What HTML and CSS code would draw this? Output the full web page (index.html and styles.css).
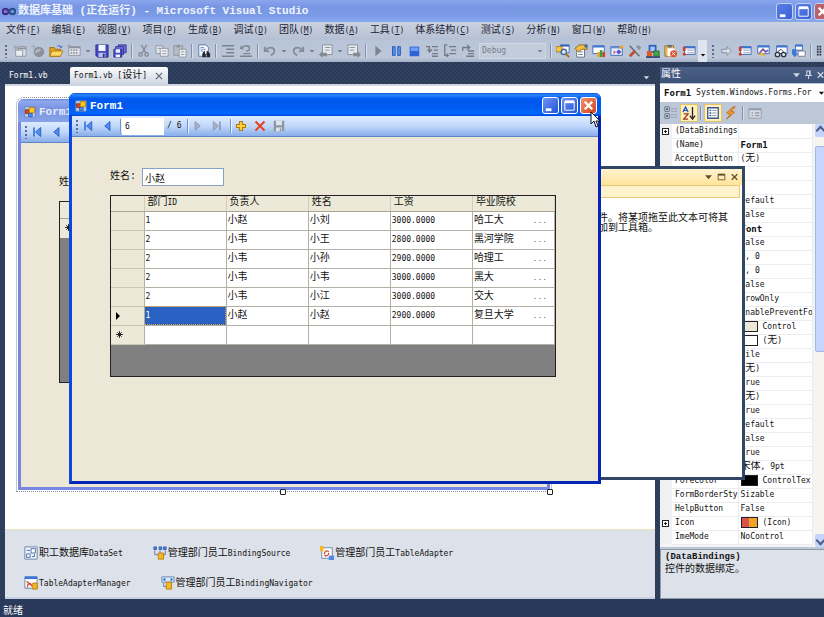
FILE: index.html
```html
<!DOCTYPE html>
<html lang="zh-CN">

<head>
    <meta charset="utf-8">
    <title>数据库基础 (正在运行) - Microsoft Visual Studio</title>
    <link rel="stylesheet" href="styles.css">
</head>

<body>

    <!-- shared icons -->
    <svg class="symbols" aria-hidden="true">
        <symbol id="i-vs" viewBox="0 0 16 10">
            <path d="M8 5C6 1 1 1 1 5s5 4 7 0" fill="none" stroke="#3b2c86" stroke-width="2.4" />
            <path d="M8 5c2-4 7-4 7 0s-5 4-7 0" fill="none" stroke="#28518f" stroke-width="2.4" />
            <path d="M3 3l3 3" stroke="#b04a9a" stroke-width="1.5" />
        </symbol>
        <symbol id="i-form" viewBox="0 0 16 16">
            <path d="M1 1h14v14H1z" fill="#b9cdea" stroke="#5d7db5" />
            <path d="M2 5h5v5H2z" fill="#d8401f" stroke="#8c2410" />
            <path d="M7 2h7v7H7z" fill="#ffc51f" stroke="#b07a08" />
            <path d="M6 10h5v4H6z" fill="#4f8df0" stroke="#2256b0" />
        </symbol>
        <symbol id="i-newproj" viewBox="0 0 16 16">
            <path d="M6 3h9v11H6z" fill="#d9dde4" stroke="#8e949e" />
            <path d="M3 7h8v7H3z" fill="#eceef2" stroke="#8e949e" />
            <path d="M6 5h9" stroke="#8e949e" stroke-width="2" />
            <path d="M3 1v6M0 4h6M1 2l4 4M5 2L1 6" stroke="#a0a5ad" />
        </symbol>
        <symbol id="i-newsite" viewBox="0 0 16 16">
            <circle cx="9" cy="9" r="6" fill="#8b9099" />
            <path d="M5 8c2-3 5-3 6-2s-1 3-3 3-1 3-3 2" fill="#b4b8bf" />
            <path d="M3 0v6M0 3h6" stroke="#a5aab2" />
        </symbol>
        <symbol id="i-open" viewBox="0 0 16 16">
            <path d="M1 4h5l1 2h6v8H1z" fill="#e8a317" stroke="#9b6a0c" />
            <path d="M3 8h13l-3 6H1z" fill="#ffd767" stroke="#a8760f" />
            <path d="M9 3c2-2 4-1 5 1l1-2M14 4l-2-1" fill="none" stroke="#2f5fb3" />
        </symbol>
        <symbol id="i-additem" viewBox="0 0 16 16">
            <path d="M2 3h13v10H2z" fill="#e6e9ee" stroke="#8e949e" />
            <path d="M2 4h13" stroke="#8e949e" stroke-width="2" />
            <path d="M4 7h9M4 10h9" stroke="#9298a2" stroke-dasharray="2 1" stroke-width="2" />
            <path d="M2 0v5M0 2h5" stroke="#9aa0a9" />
        </symbol>
        <symbol id="i-save" viewBox="0 0 16 16">
            <path d="M1 1h14v14H3l-2-2z" fill="#4348bf" stroke="#2b2f8d" />
            <path d="M4 1h8v7H4z" fill="#f4f6ff" />
            <path d="M4 10h8v5H4z" fill="#b9bfea" />
            <path d="M9 11h2v4H9z" fill="#2b2f8d" />
        </symbol>
        <symbol id="i-saveall" viewBox="0 0 16 16">
            <path d="M6 1h9v9H6z" fill="#6d73dc" stroke="#2b2f8d" />
            <path d="M3 3h9v9H3z" fill="#6d73dc" stroke="#2b2f8d" />
            <path d="M1 6h9v9H1z" fill="#4348bf" stroke="#2b2f8d" />
            <path d="M3 6h5v4H3zM3 12h5v3H3z" fill="#eef0ff" />
        </symbol>
        <symbol id="i-cut" viewBox="0 0 16 16">
            <path d="M5 1l5 9M11 1L6 10" stroke="#868c96" stroke-width="1.6" />
            <circle cx="4" cy="12" r="2" fill="none" stroke="#868c96" stroke-width="1.5" />
            <circle cx="11" cy="12" r="2" fill="none" stroke="#868c96" stroke-width="1.5" />
        </symbol>
        <symbol id="i-copy" viewBox="0 0 16 16">
            <path d="M1 2h8v9H1z" fill="#dfe2e8" stroke="#8e949e" />
            <path d="M6 5h9v9H6z" fill="#eceef2" stroke="#8e949e" />
            <path d="M8 8h5M8 11h5M3 5h3" stroke="#8e949e" />
        </symbol>
        <symbol id="i-paste" viewBox="0 0 16 16">
            <path d="M1 2h10v11H1z" fill="#b7bcc5" stroke="#8e949e" />
            <path d="M4 1h4v3H4z" fill="#8e949e" />
            <path d="M7 6h8v9H7z" fill="#eceef2" stroke="#8e949e" />
            <path d="M9 9h4M9 12h4" stroke="#8e949e" />
        </symbol>
        <symbol id="i-find" viewBox="0 0 16 16">
            <path d="M2 1h8l3 3v10H2z" fill="#f5f8fc" stroke="#5675a3" />
            <path d="M4 4h4M4 6h6M4 8h3" stroke="#6b8fc4" />
            <path d="M6 15V11l2-3h1v3h2V8h1l3 3v4h-4v-3h-1v3z" fill="#1f2733" />
        </symbol>
        <symbol id="i-comment" viewBox="0 0 16 16">
            <path d="M1 2h14M6 6h9M6 10h9M1 14h14" stroke="#7d838d" stroke-width="1.5" />
            <path d="M1 4v8" stroke="#b9bec7" />
        </symbol>
        <symbol id="i-uncomment" viewBox="0 0 16 16">
            <path d="M1 14h14M5 11h8M3 2l-1 3 3 1" fill="none" stroke="#7d838d" stroke-width="1.5" />
            <path d="M3 5c3-4 9-4 9 0 0 2-2 3-4 3" fill="none" stroke="#7d838d" stroke-width="1.5" />
        </symbol>
        <symbol id="i-undo" viewBox="0 0 16 16">
            <path d="M2 3v5h5" fill="none" stroke="#858b95" stroke-width="2" />
            <path d="M3 7c3-4 10-4 10 1 0 3-2 4-4 5" fill="none" stroke="#858b95" stroke-width="2" />
        </symbol>
        <symbol id="i-redo" viewBox="0 0 16 16">
            <path d="M14 3v5H9" fill="none" stroke="#858b95" stroke-width="2" />
            <path d="M13 7C10 3 3 3 3 8c0 3 2 4 4 5" fill="none" stroke="#858b95" stroke-width="2" />
        </symbol>
        <symbol id="i-back" viewBox="0 0 16 16">
            <path d="M4 1h11v11H4z" fill="#e6e9ee" stroke="#838993" />
            <path d="M7 4h6M7 7h5" stroke="#838993" />
            <path d="M0 12l4-4v2h5v4H4v2z" fill="#858b95" />
        </symbol>
        <symbol id="i-fwd" viewBox="0 0 16 16">
            <path d="M1 1h11v11H1z" fill="#e6e9ee" stroke="#838993" />
            <path d="M3 4h6M3 7h5" stroke="#838993" />
            <path d="M16 12l-4-4v2H7v4h5v2z" fill="#858b95" />
        </symbol>
        <symbol id="i-play" viewBox="0 0 16 16">
            <path d="M5 2l7 6-7 6z" fill="#7b828d" />
        </symbol>
        <symbol id="i-pause" viewBox="0 0 16 16">
            <path d="M4 3h3v10H4zM10 3h3v10h-3z" fill="#5f95f0" stroke="#1d4fb3" />
        </symbol>
        <symbol id="i-stop" viewBox="0 0 16 16">
            <path d="M3 3h11v11H3z" fill="#2e63d8" />
            <path d="M4 4h9v4H4z" fill="#6e9cf4" />
        </symbol>
        <symbol id="i-stepinto" viewBox="0 0 16 16">
            <path d="M8 3h7M10 7h5M8 11h7M8 14h7" stroke="#737a85" stroke-width="1.5" />
            <path d="M1 3h4v5M3 6l2 3 3-3" fill="none" stroke="#737a85" stroke-width="1.5" />
        </symbol>
        <symbol id="i-stepover" viewBox="0 0 16 16">
            <path d="M7 3h8M9 7h6M7 11h8" stroke="#737a85" stroke-width="1.5" />
            <path d="M5 1H2v12h3M4 11l2 2-2 2" fill="none" stroke="#737a85" stroke-width="1.5" />
        </symbol>
        <symbol id="i-stepout" viewBox="0 0 16 16">
            <path d="M8 8h7M8 11h7M6 14h9" stroke="#737a85" stroke-width="1.5" />
            <path d="M2 8V4h7M7 1l3 3-3 3" fill="none" stroke="#737a85" stroke-width="1.5" />
        </symbol>
        <symbol id="i-explorer" viewBox="0 0 16 16">
            <path d="M5 1h10v9H5z" fill="#fff" stroke="#3566b5" />
            <path d="M5 2h10" stroke="#3566b5" stroke-width="2" />
            <path d="M0 3h7v6H0z" fill="#f5c647" stroke="#a87a10" />
            <circle cx="9" cy="9" r="3" fill="#d7e8fb" stroke="#47698f" stroke-width="1.5" />
            <path d="M11 11l4 4" stroke="#a56b1c" stroke-width="2" />
        </symbol>
        <symbol id="i-props" viewBox="0 0 16 16">
            <path d="M3 5h9v10H3z" fill="#fff" stroke="#5b6a80" />
            <path d="M5 9h5M5 12h5" stroke="#5b6a80" />
            <path d="M1 5l5-4h9v5H9l-4 3z" fill="#f2bd45" stroke="#8c6414" />
            <path d="M12 1h3v3h-3z" fill="#3566b5" />
        </symbol>
        <symbol id="i-window" viewBox="0 0 16 16">
            <path d="M1 2h13v9H1z" fill="#fff" stroke="#3566b5" />
            <path d="M1 3h13" stroke="#3b75d8" stroke-width="2" />
            <path d="M6 9h3v6H6z" fill="#f0a81c" />
            <path d="M9 7h3v8H9z" fill="#3a9a3f" />
            <path d="M12 9h3v6h-3z" fill="#d8422b" />
        </symbol>
        <symbol id="i-gallery" viewBox="0 0 16 16">
            <path d="M1 3h13v10H1z" fill="#e9f1fb" stroke="#3566b5" />
            <path d="M1 4h13" stroke="#5f8ee0" stroke-width="2" />
            <path d="M4 7l3 2-3 3z" fill="#d45cb0" />
            <path d="M10 6l3 3-3 3-3-3z" fill="#5a55c8" />
            <path d="M10 3l4-2 1 3-3 2z" fill="#f2a11d" />
        </symbol>
        <symbol id="i-tools" viewBox="0 0 16 16">
            <path d="M2 2l11 12" stroke="#69717d" stroke-width="2" />
            <path d="M8 8l-6 6" stroke="#c24a26" stroke-width="3" />
            <path d="M9 3l4 4 2-3-3-3z" fill="#8a919c" />
        </symbol>
        <symbol id="i-extension" viewBox="0 0 16 16">
            <path d="M3 1h9v9H3z" fill="#2d62c4" />
            <path d="M5 3h5v5H5z" fill="#a9c9fa" />
            <path d="M1 8h6v7H1z" fill="#de5a2c" />
            <path d="M9 8h6v6H9z" fill="#4aa845" stroke="#23692a" />
            <path d="M0 15h16" stroke="#344c78" stroke-width="2" />
        </symbol>
        <symbol id="i-paste-error" viewBox="0 0 16 16">
            <path d="M1 2h10v12H1z" fill="#e8b95f" stroke="#94702c" />
            <path d="M4 1h5v3H4z" fill="#66727f" />
            <path d="M4 5h8v9H4z" fill="#fff" />
            <circle cx="11" cy="11" r="4" fill="#e05127" />
            <path d="M9 9l4 4M13 9l-4 4" stroke="#fff" />
        </symbol>
        <symbol id="i-errors" viewBox="0 0 16 16">
            <path d="M3 3h12v9H3z" fill="#fff" stroke="#3566b5" />
            <path d="M3 4h12" stroke="#3b75d8" stroke-width="2" />
            <path d="M6 7h8M6 10h8" stroke="#8190a8" />
            <path d="M1 3h3v5H1zM1 10h3v3H1z" fill="#d93a22" />
        </symbol>
        <symbol id="i-arrow" viewBox="0 0 16 16">
            <path d="M2 6h6V3l5 5-5 5v-3H2z" fill="#d9dee7" stroke="#7e8794" />
        </symbol>
        <symbol id="i-watch" viewBox="0 0 16 16">
            <path d="M2 2h13v9H2z" fill="#fff" stroke="#3566b5" />
            <path d="M2 3h13" stroke="#3b75d8" stroke-width="2" />
            <path d="M4 10l4-4 3 3 3-2" fill="none" stroke="#7250b5" stroke-width="2" />
            <path d="M3 12l4-3 4 5z" fill="#f2b526" />
        </symbol>
        <symbol id="i-glasses" viewBox="0 0 16 16">
            <path d="M3 2h12v9H3z" fill="#fff" stroke="#3566b5" />
            <path d="M3 3h12" stroke="#3b75d8" stroke-width="2" />
            <circle cx="4" cy="12" r="2.5" fill="#dfe9f7" stroke="#2c333e" stroke-width="1.5" />
            <circle cx="11" cy="12" r="2.5" fill="#dfe9f7" stroke="#2c333e" stroke-width="1.5" />
            <path d="M4 9l4-3 3 3" fill="none" stroke="#2c333e" />
        </symbol>
        <symbol id="i-stack" viewBox="0 0 16 16">
            <path d="M4 1h8v6H4z" fill="#fff" stroke="#3566b5" />
            <path d="M4 2h8" stroke="#3b75d8" stroke-width="2" />
            <path d="M7 8h8v6H7z" fill="#fff" stroke="#6f7681" />
            <path d="M0 6h5v5h2l-4 4-3-4z" fill="#3e78da" />
        </symbol>
        <symbol id="i-hex" viewBox="0 0 16 16">
            <path d="M1 3h6M1 6h6M1 9h6M1 12h6" stroke="#2c333e" stroke-width="2" stroke-dasharray="2 1" />
        </symbol>
        <symbol id="i-first" viewBox="0 0 16 16">
            <path d="M3 2h2v12H3z" fill="#2c66d4" />
            <path d="M13 2v12L6 8z" fill="#4e8cf0" stroke="#1c4fb8" />
        </symbol>
        <symbol id="i-prev" viewBox="0 0 16 16">
            <path d="M12 2v12L5 8z" fill="#4e8cf0" stroke="#1c4fb8" />
        </symbol>
        <symbol id="i-next" viewBox="0 0 16 16">
            <path d="M4 2v12l7-6z" fill="#a3afc4" stroke="#8794ac" />
        </symbol>
        <symbol id="i-last" viewBox="0 0 16 16">
            <path d="M3 2v12l7-6z" fill="#a3afc4" stroke="#8794ac" />
            <path d="M11 2h2v12h-2z" fill="#8794ac" />
        </symbol>
        <symbol id="i-plus" viewBox="0 0 16 16">
            <path d="M6 2h4v4h4v4h-4v4H6v-4H2V6h4z" fill="#ffd23c" stroke="#b47c0c" stroke-width="1.5" />
        </symbol>
        <symbol id="i-delete" viewBox="0 0 16 16">
            <path d="M2 2l12 12M14 2L2 14" stroke="#e8401c" stroke-width="2.5" />
        </symbol>
        <symbol id="i-save-off" viewBox="0 0 16 16">
            <path d="M1 1h14v14H1z" fill="#8d96a3" />
            <path d="M4 1h8v6H4zM4 10h8v5H4z" fill="#dbe2ec" />
            <path d="M9 11h2v4H9z" fill="#8d96a3" />
        </symbol>
        <symbol id="i-min" viewBox="0 0 16 16">
            <path d="M3 11h6v3H3z" fill="#fff" />
        </symbol>
        <symbol id="i-max" viewBox="0 0 16 16">
            <path d="M3 4h10v9H3z" fill="none" stroke="#fff" />
            <path d="M3 4h10" stroke="#fff" stroke-width="3" />
        </symbol>
        <symbol id="i-close" viewBox="0 0 16 16">
            <path d="M4 4l8 8M12 4l-8 8" stroke="#fff" stroke-width="2.5" />
        </symbol>
        <symbol id="i-x" viewBox="0 0 16 16">
            <path d="M3 3l10 10M13 3L3 13" stroke="currentColor" stroke-width="2.2" />
        </symbol>
        <symbol id="i-caret" viewBox="0 0 16 16">
            <path d="M2 5h12l-6 7z" fill="currentColor" />
        </symbol>
        <symbol id="i-pin" viewBox="0 0 16 16">
            <path d="M5 1h6v8H5zM2 9h12M8 9v6M10 1v8" fill="none" stroke="currentColor" stroke-width="1.8" />
        </symbol>
        <symbol id="i-box" viewBox="0 0 16 16">
            <path d="M2 3h12v10H2z" fill="none" stroke="currentColor" stroke-width="1.5" />
            <path d="M2 4h12" stroke="currentColor" stroke-width="3" />
        </symbol>
        <symbol id="i-category" viewBox="0 0 16 16">
            <path d="M1 1h5v5H1zM1 9h5v5H1z" fill="#fff" stroke="#4a5a75" />
            <path d="M2 3.5h3M3.5 2v3M2 11.5h3M3.5 10v3" stroke="#1f2b40" />
            <path d="M8 3h7M8 6h7M8 10h7M8 13h7" stroke="#8a93a3" stroke-dasharray="3 1" />
        </symbol>
        <symbol id="i-sort" viewBox="0 0 16 16">
            <path d="M1 7l3-6 3 6M2 5h4" fill="none" stroke="#2c5bc0" stroke-width="1.5" />
            <path d="M2 9h5l-5 6h5" fill="none" stroke="#a13c1d" stroke-width="1.5" />
            <path d="M12 1v12M9 11l3 4 3-4" fill="none" stroke="#222" stroke-width="1.5" />
        </symbol>
        <symbol id="i-list" viewBox="0 0 16 16">
            <path d="M2 2h12v12H2z" fill="#fff" stroke="#3d5686" stroke-width="1.5" />
            <path d="M4 5h2M4 8h2M4 11h2" stroke="#234fa8" stroke-width="1.5" />
            <path d="M7 5h5M7 8h5M7 11h5" stroke="#7c8798" />
        </symbol>
        <symbol id="i-bolt" viewBox="0 0 16 16">
            <path d="M10 1L3 8l4 1-4 6 9-8-4-1 5-5z" fill="#f39a2d" stroke="#c46614" />
        </symbol>
        <symbol id="i-page" viewBox="0 0 16 16">
            <path d="M1 3h14v11H1z" fill="#d6dae2" stroke="#949ba8" />
            <path d="M1 4h14M4 8h2M8 8h5M4 11h2M8 11h5" stroke="#949ba8" stroke-width="1.5" />
        </symbol>
        <symbol id="i-dataset" viewBox="0 0 16 16">
            <path d="M1 1h14v14H1z" fill="#edf3fb" stroke="#5f7fae" />
            <path d="M8 3h5v5H8zM3 9h4v4H3z" fill="#fff" stroke="#44689c" />
            <path d="M3 5h4M9 12h3V9" fill="none" stroke="#44689c" />
        </symbol>
        <symbol id="i-source" viewBox="0 0 16 16">
            <path d="M1 1h3v3H1zM7 1h3v3H7zM12 1h3v3h-3z" fill="#4d8ae0" stroke="#2e5fae" />
            <path d="M2 5v5h4M14 5v5h-4M8 5v3" fill="none" stroke="#56749f" />
            <path d="M6 8h6v7H6z" fill="#f5b921" stroke="#b57d0b" />
        </symbol>
        <symbol id="i-adapter" viewBox="0 0 16 16">
            <path d="M2 2h12v12H2z" fill="#fff" stroke="#5f7fae" />
            <path d="M5 9c0-4 4-4 5-2M10 8c0 4-4 4-5 2" fill="none" stroke="#d3492a" stroke-width="1.5" />
            <path d="M0 0h4v6H0z" fill="#f5b921" />
            <path d="M10 11h6v5h-6z" fill="#4d8ae0" />
        </symbol>
        <symbol id="i-manager" viewBox="0 0 16 16">
            <path d="M1 1h14v13H1z" fill="#fff" stroke="#5f7fae" />
            <path d="M1 2h14" stroke="#3b75d8" stroke-width="3" />
            <path d="M4 13c0-6 4-6 5-1M3 6l4 4" fill="none" stroke="#d3492a" stroke-width="1.5" />
            <path d="M10 8h5v7h-5z" fill="#f5b921" stroke="#b57d0b" />
        </symbol>
        <symbol id="i-navigator" viewBox="0 0 16 16">
            <path d="M1 1h14v6H1z" fill="#dbe8f9" stroke="#5f7fae" />
            <path d="M5 2v4L2 4zM11 2v4l3-2z" fill="#2f67c8" />
            <path d="M3 8v4h3" fill="none" stroke="#56749f" />
            <path d="M6 7h6v8H6z" fill="#f5b921" stroke="#b57d0b" />
        </symbol>
        <symbol id="i-star" viewBox="0 0 16 16">
            <path d="M8 2v12M2 8h12M4 4l8 8M12 4l-8 8" stroke="#111" stroke-width="1.6" />
        </symbol>
    </svg>

    <div class="ide">
        <header class="ide-title">
            <svg class="vs-logo"><use href="#i-vs" /></svg>
            <h1>数据库基础 (正在运行) - Microsoft Visual Studio</h1>
            <div class="win-buttons">
                <button aria-label="最小化"><svg><use href="#i-min" /></svg></button>
                <button aria-label="最大化"><svg><use href="#i-max" /></svg></button>
                <button class="close" aria-label="关闭"><svg><use href="#i-close" /></svg></button>
            </div>
        </header>

        <nav class="menu">
            <button>文件<span class="en">(<u>F</u>)</span></button>
            <button>编辑<span class="en">(<u>E</u>)</span></button>
            <button>视图<span class="en">(<u>V</u>)</span></button>
            <button>项目<span class="en">(<u>P</u>)</span></button>
            <button>生成<span class="en">(<u>B</u>)</span></button>
            <button>调试<span class="en">(<u>D</u>)</span></button>
            <button>团队<span class="en">(<u>M</u>)</span></button>
            <button>数据<span class="en">(<u>A</u>)</span></button>
            <button>工具<span class="en">(<u>T</u>)</span></button>
            <button>体系结构<span class="en">(<u>C</u>)</span></button>
            <button>测试<span class="en">(<u>S</u>)</span></button>
            <button>分析<span class="en">(<u>N</u>)</span></button>
            <button>窗口<span class="en">(<u>W</u>)</span></button>
            <button>帮助<span class="en">(<u>H</u>)</span></button>
        </nav>

        <div class="toolbar">
            <span class="grip"></span>
            <button aria-label="新建项目"><svg><use href="#i-newproj" /></svg></button>
            <button aria-label="新建网站"><svg><use href="#i-newsite" /></svg></button>
            <button aria-label="打开文件"><svg><use href="#i-open" /></svg></button>
            <button aria-label="添加新项"><svg><use href="#i-additem" /></svg></button>
            <button class="drop" aria-label="更多"><svg><use href="#i-caret" /></svg></button>
            <button aria-label="保存"><svg><use href="#i-save" /></svg></button>
            <button aria-label="全部保存"><svg><use href="#i-saveall" /></svg></button>
            <span class="sep"></span>
            <button aria-label="剪切"><svg><use href="#i-cut" /></svg></button>
            <button aria-label="复制"><svg><use href="#i-copy" /></svg></button>
            <button aria-label="粘贴"><svg><use href="#i-paste" /></svg></button>
            <span class="sep"></span>
            <button aria-label="查找"><svg><use href="#i-find" /></svg></button>
            <span class="sep"></span>
            <button aria-label="注释"><svg><use href="#i-comment" /></svg></button>
            <button aria-label="取消注释"><svg><use href="#i-uncomment" /></svg></button>
            <span class="sep"></span>
            <button aria-label="撤消"><svg><use href="#i-undo" /></svg></button>
            <button class="drop" aria-label="撤消列表"><svg><use href="#i-caret" /></svg></button>
            <button aria-label="重做"><svg><use href="#i-redo" /></svg></button>
            <button class="drop" aria-label="重做列表"><svg><use href="#i-caret" /></svg></button>
            <button aria-label="向后导航"><svg><use href="#i-back" /></svg></button>
            <button class="drop" aria-label="导航列表"><svg><use href="#i-caret" /></svg></button>
            <button aria-label="向前导航"><svg><use href="#i-fwd" /></svg></button>
            <span class="sep"></span>
            <button aria-label="继续"><svg><use href="#i-play" /></svg></button>
            <button aria-label="全部中断"><svg><use href="#i-pause" /></svg></button>
            <button aria-label="停止调试"><svg><use href="#i-stop" /></svg></button>
            <button aria-label="逐语句"><svg><use href="#i-stepinto" /></svg></button>
            <button aria-label="逐过程"><svg><use href="#i-stepover" /></svg></button>
            <button aria-label="跳出"><svg><use href="#i-stepout" /></svg></button>
            <span class="combo">
                <select class="en" aria-label="解决方案配置" disabled>
                    <option>Debug</option>
                </select>
                <svg><use href="#i-caret" /></svg>
            </span>
            <span class="sep"></span>
            <button aria-label="解决方案资源管理器"><svg><use href="#i-explorer" /></svg></button>
            <button aria-label="属性窗口"><svg><use href="#i-props" /></svg></button>
            <button aria-label="对象浏览器"><svg><use href="#i-window" /></svg></button>
            <button aria-label="起始页"><svg><use href="#i-gallery" /></svg></button>
            <button aria-label="工具箱"><svg><use href="#i-tools" /></svg></button>
            <button aria-label="扩展管理器"><svg><use href="#i-extension" /></svg></button>
            <button aria-label="错误列表"><svg><use href="#i-paste-error" /></svg></button>
            <button aria-label="即时窗口"><svg><use href="#i-errors" /></svg></button>
            <button class="overflow" aria-label="工具栏选项"><svg><use href="#i-caret" /></svg></button>
            <span class="grip"></span>
            <button aria-label="显示下一语句"><svg><use href="#i-arrow" /></svg></button>
            <button aria-label="断点"><svg><use href="#i-errors" /></svg></button>
            <button aria-label="局部变量"><svg><use href="#i-watch" /></svg></button>
            <button aria-label="监视"><svg><use href="#i-glasses" /></svg></button>
            <button aria-label="调用堆栈"><svg><use href="#i-stack" /></svg></button>
            <span class="sep"></span>
            <button aria-label="十六进制"><svg><use href="#i-hex" /></svg></button>
        </div>

        <main class="workspace">
            <section class="documents">
                <div class="tabs">
                    <button class="tab en">Form1.vb</button>
                    <button class="tab active"><span class="en">Form1.vb [</span>设计<span class="en">]</span><svg><use href="#i-x" /></svg></button>
                    <svg class="tab-list"><use href="#i-caret" /></svg>
                </div>

                <div class="designer">
                    <!-- form being designed -->
                    <div class="form-window design">
                        <div class="form-title">
                            <svg><use href="#i-form" /></svg>
                            <h2>Form1</h2>
                        </div>
                        <div class="navigator">
                            <span class="grip"></span>
                            <svg><use href="#i-first" /></svg>
                            <svg><use href="#i-prev" /></svg>
                        </div>
                        <div class="form-body">
                            <div class="field"><span>姓名:</span></div>
                            <div class="grid">
                                <div class="grid-blank-head"></div>
                                <div class="grid-blank-row"><svg><use href="#i-star" /></svg></div>
                            </div>
                        </div>
                    </div>
                    <i class="handle bottom"></i>
                    <i class="handle corner"></i>
                </div>

                <div class="tray">
                    <div class="tray-row">
                        <span><svg><use href="#i-dataset" /></svg>职工数据库<span class="en">DataSet</span></span>
                        <span><svg><use href="#i-source" /></svg>管理部门员工<span class="en">BindingSource</span></span>
                        <span><svg><use href="#i-adapter" /></svg>管理部门员工<span class="en">TableAdapter</span></span>
                    </div>
                    <div class="tray-row">
                        <span><svg><use href="#i-manager" /></svg><span class="en">TableAdapterManager</span></span>
                        <span><svg><use href="#i-navigator" /></svg>管理部门员工<span class="en">BindingNavigator</span></span>
                    </div>
                </div>
            </section>

            <aside class="properties">
                <div class="panel-title">
                    <h2>属性</h2>
                    <svg><use href="#i-caret" /></svg>
                    <svg><use href="#i-pin" /></svg>
                    <svg><use href="#i-x" /></svg>
                </div>
                <button class="object en"><b>Form1</b> System.Windows.Forms.For<svg><use href="#i-caret" /></svg></button>
                <div class="prop-tools">
                    <button aria-label="按分类顺序"><svg><use href="#i-category" /></svg></button>
                    <button class="on" aria-label="字母顺序"><svg><use href="#i-sort" /></svg></button>
                    <span class="sep"></span>
                    <button class="on" aria-label="属性"><svg><use href="#i-list" /></svg></button>
                    <button aria-label="事件"><svg><use href="#i-bolt" /></svg></button>
                    <span class="sep"></span>
                    <button aria-label="属性页"><svg><use href="#i-page" /></svg></button>
                </div>
                <div class="prop-list">
                    <table class="en">
                        <tr><td><i class="expand"></i></td><th>(DataBindings</th><td></td></tr>
                        <tr><td></td><th>(Name)</th><td><b>Form1</b></td></tr>
                        <tr><td></td><th>AcceptButton</th><td>(<span class="cn">无</span>)</td></tr>
                        <tr><td></td><th></th><td></td></tr>
                        <tr><td></td><th></th><td></td></tr>
                        <tr><td></td><th></th><td>Default</td></tr>
                        <tr><td></td><th></th><td>False</td></tr>
                        <tr><td></td><th></th><td><b>Font</b></td></tr>
                        <tr><td></td><th></th><td>False</td></tr>
                        <tr><td></td><th></th><td>0, 0</td></tr>
                        <tr><td></td><th></th><td>0, 0</td></tr>
                        <tr><td></td><th></th><td>False</td></tr>
                        <tr><td></td><th></th><td>GrowOnly</td></tr>
                        <tr><td></td><th></th><td>EnablePreventFo</td></tr>
                        <tr><td></td><th></th><td><i class="swatch control"></i>Control</td></tr>
                        <tr><td></td><th></th><td><i class="swatch"></i>(<span class="cn">无</span>)</td></tr>
                        <tr><td></td><th></th><td>Tile</td></tr>
                        <tr><td></td><th></th><td>(<span class="cn">无</span>)</td></tr>
                        <tr><td></td><th></th><td>True</td></tr>
                        <tr><td></td><th></th><td>(<span class="cn">无</span>)</td></tr>
                        <tr><td></td><th></th><td>True</td></tr>
                        <tr><td></td><th></th><td>Default</td></tr>
                        <tr><td></td><th></th><td>False</td></tr>
                        <tr><td></td><th></th><td>True</td></tr>
                        <tr><td></td><th></th><td><span class="cn">宋体</span>, 9pt</td></tr>
                        <tr><td></td><th>ForeColor</th><td><i class="swatch text"></i>ControlTex</td></tr>
                        <tr><td></td><th>FormBorderSty</th><td>Sizable</td></tr>
                        <tr><td></td><th>HelpButton</th><td>False</td></tr>
                        <tr><td><i class="expand"></i></td><th>Icon</th><td><i class="swatch icon"></i>(Icon)</td></tr>
                        <tr><td></td><th>ImeMode</th><td>NoControl</td></tr>
                    </table>
                    <div class="scrollbar">
                        <span class="arrow up"></span>
                        <span class="thumb"></span>
                        <span class="arrow"></span>
                    </div>
                </div>
                <div class="prop-help">
                    <b>(DataBindings)</b>
                    <p>控件的数据绑定。</p>
                </div>
            </aside>
        </main>

        <footer class="status">就绪</footer>
    </div>

    <!-- floating toolbox -->
    <section class="toolbox">
        <div class="toolbox-title">
            <svg><use href="#i-caret" /></svg>
            <svg><use href="#i-box" /></svg>
            <svg><use href="#i-x" /></svg>
        </div>
        <div class="toolbox-group"></div>
        <p>件。将某项拖至此文本可将其加到工具箱。</p>
    </section>

    <!-- running form -->
    <section class="form-window running">
        <div class="form-title">
            <svg><use href="#i-form" /></svg>
            <h2>Form1</h2>
            <div class="win-buttons">
                <button aria-label="最小化"><svg><use href="#i-min" /></svg></button>
                <button aria-label="最大化"><svg><use href="#i-max" /></svg></button>
                <button class="close" aria-label="关闭"><svg><use href="#i-close" /></svg></button>
            </div>
        </div>
        <div class="navigator">
            <span class="grip"></span>
            <button aria-label="第一条"><svg><use href="#i-first" /></svg></button>
            <button aria-label="上一条"><svg><use href="#i-prev" /></svg></button>
            <span class="sep"></span>
            <input class="en" type="text" value="6" aria-label="当前位置">
            <span class="count en">/ 6</span>
            <span class="sep"></span>
            <button aria-label="下一条"><svg><use href="#i-next" /></svg></button>
            <button aria-label="最后一条"><svg><use href="#i-last" /></svg></button>
            <span class="sep"></span>
            <button aria-label="新添"><svg><use href="#i-plus" /></svg></button>
            <button aria-label="删除"><svg><use href="#i-delete" /></svg></button>
            <button aria-label="保存数据"><svg><use href="#i-save-off" /></svg></button>
        </div>
        <div class="form-body">
            <div class="field">
                <label for="name">姓名:</label>
                <input type="text" id="name" value="小赵">
            </div>
            <div class="grid">
                <table>
                    <thead>
                        <tr>
                            <th></th>
                            <th>部门<span class="en">ID</span></th>
                            <th>负责人</th>
                            <th>姓名</th>
                            <th>工资</th>
                            <th>毕业院校</th>
                        </tr>
                    </thead>
                    <tbody>
                        <tr><th></th><td class="en">1</td><td>小赵</td><td>小刘</td><td class="en">3000.0000</td><td>哈工大<i>...</i></td></tr>
                        <tr><th></th><td class="en">2</td><td>小韦</td><td>小王</td><td class="en">2800.0000</td><td>黑河学院<i>...</i></td></tr>
                        <tr><th></th><td class="en">2</td><td>小韦</td><td>小孙</td><td class="en">2900.0000</td><td>哈理工<i>...</i></td></tr>
                        <tr><th></th><td class="en">2</td><td>小韦</td><td>小韦</td><td class="en">3000.0000</td><td>黑大<i>...</i></td></tr>
                        <tr><th></th><td class="en">2</td><td>小韦</td><td>小江</td><td class="en">3000.0000</td><td>交大<i>...</i></td></tr>
                        <tr><th><i class="current"></i></th><td class="en selected">1</td><td>小赵</td><td>小赵</td><td class="en">2900.0000</td><td>复旦大学<i>...</i></td></tr>
                        <tr><th><svg><use href="#i-star" /></svg></th><td></td><td></td><td></td><td></td><td></td></tr>
                    </tbody>
                </table>
            </div>
        </div>
    </section>

    <svg class="cursor" viewBox="0 0 10 17" aria-hidden="true">
        <path d="M1 1v12l3-3 2 6 2-1-2-5h4z" fill="#fff" stroke="#111" />
    </svg>

</body>

</html>
```

FILE: styles.css
```css
* {
    box-sizing: border-box;
}

body {
    margin: 0;
    height: 100vh;
    overflow: hidden;
    position: relative;
    background-color: #2b3c59;
    font-family: "Liberation Mono", "Noto Sans CJK SC", monospace;
    font-size: 10px;
    line-height: 14px;
    color: #111;
}

h1,
h2,
p {
    margin: 0;
    font-size: 11px;
    font-weight: bold;
}

button,
input,
select {
    font-family: inherit;
    font-size: 10px;
    line-height: 14px;
    color: inherit;
    margin: 0;
    padding: 0;
    border: none;
    background: none;
}

svg {
    width: 14px;
    height: 14px;
    flex: none;
}

.symbols {
    position: absolute;
    width: 0;
    height: 0;
}

/* latin text is set smaller so two letters take one han cell */
.en,
.navigator .en {
    font-family: "DejaVu Sans Mono", "Noto Sans CJK SC", monospace;
    font-size: 8px;
}

.cn {
    font-size: 10px;
    line-height: 10px;
}

.sep {
    flex: none;
    width: 2px;
    height: 14px;
    margin: 0 2px;
    border-left: 1px solid #8591a8;
    border-right: 1px solid #d9dfe9;
}

.grip {
    flex: none;
    width: 2px;
    height: 13px;
    margin: 0 4px 0 5px;
    background: repeating-linear-gradient(#5d6b85 0 2px, transparent 2px 4px);
}

/* main window */
.ide {
    display: flex;
    flex-direction: column;
    width: calc(100% + 8px);
    height: 100%;
}

.ide-title {
    display: flex;
    align-items: center;
    height: 22px;
    padding: 0 1px 0 2px;
    background: linear-gradient(#8aa6ee, #7896e3 30%, #7b9be6 70%, #86a8ee);
    color: #eef3fd;
}

.vs-logo {
    height: 9px;
}

.ide-title h1 {
    flex: 1;
    margin-left: 2px;
    white-space: nowrap;
}

.win-buttons {
    display: flex;
    gap: 2px;
}

.win-buttons button {
    display: flex;
    width: 17px;
    height: 17px;
    border: 1px solid #fff;
    border-radius: 3px;
    background: linear-gradient(135deg, #6f94f2, #2453d6);
}

.win-buttons svg {
    width: 15px;
    height: 15px;
}

.win-buttons .close {
    background: linear-gradient(135deg, #f0906f, #d8431c);
}

.ide-title .win-buttons button {
    border-color: #c3d1f5;
    background: linear-gradient(135deg, #5b7fe6, #3a5fd4);
}

.ide-title .win-buttons .close {
    background: #b9616c;
}

.menu {
    display: flex;
    align-items: center;
    gap: 11px;
    height: 18px;
    padding-left: 6px;
    background: linear-gradient(#cbd2df, #b6c0d4);
}

.menu button {
    white-space: nowrap;
    color: #1b2536;
}

.toolbar {
    display: flex;
    align-items: center;
    height: 22px;
    background: linear-gradient(#b7c3d7, #bcc7d9 80%, #a3b0c6);
}

.toolbar button {
    display: flex;
    justify-content: center;
    flex: none;
    width: 18px;
}

.toolbar .drop {
    width: 10px;
    color: #6d7889;
}

.toolbar .drop svg,
.toolbar .overflow svg {
    width: 6px;
    height: 14px;
}

.toolbar .overflow {
    width: 9px;
    align-self: stretch;
    align-items: flex-end;
    background: #dfe5ef;
}

.combo {
    display: flex;
    align-items: center;
    width: 74px;
    height: 16px;
    margin: 0 2px;
    padding: 0 2px;
    border: 1px solid #d2d8e3;
    background: #c3ccdb;
    color: #747e8e;
}

.combo select {
    flex: 1;
    appearance: none;
    color: #747e8e;
    opacity: 1;
}

.combo svg {
    width: 6px;
}

.workspace {
    display: flex;
    gap: 5px;
    flex: 1;
    min-height: 0;
    padding: 5px 0 0 5px;
    background: repeating-conic-gradient(#2a3a57 0 25%, #30425f 0 50%) 0 0 / 4px 4px;
}

.documents {
    display: flex;
    flex-direction: column;
    flex: 1;
    min-width: 0;
}

.tabs {
    display: flex;
    height: 17px;
}

.tab {
    width: 65px;
    padding-left: 4px;
    text-align: left;
    color: #fff;
    white-space: nowrap;
}

.tab.active {
    display: flex;
    align-items: center;
    width: 98px;
    padding: 0 4px;
    border-radius: 2px 2px 0 0;
    background: linear-gradient(#fbfcfd, #d0d6e1);
    color: #111;
    white-space: pre;
}

.tab.active svg {
    width: 10px;
    margin-left: auto;
    color: #666f7d;
}

.tab-list {
    width: 7px;
    height: 17px;
    margin: 2px 5px 0 auto;
    color: #d5dcea;
}

/* design surface */
.designer {
    position: relative;
    flex: 1;
    min-height: 0;
    overflow: hidden;
    border-top: 2px solid #d0d6e1;
    background: #fff;
}

.tray {
    height: 70px;
    padding: 16px 19px 0;
    border-top: 1px solid #ece0bd;
    border-bottom: 2px solid #c5d0e2;
    background: #dde1e9;
}

.tray-row {
    display: flex;
    gap: 30px;
    height: 30px;
    white-space: nowrap;
}

.tray-row svg {
    margin-right: 1px;
    vertical-align: middle;
}

.handle {
    position: absolute;
    width: 6px;
    height: 6px;
    border: 1px solid #222;
    border-radius: 1px;
    background: #fff;
}

.handle.bottom {
    left: 275px;
    top: 403px;
}

.handle.corner {
    left: 542px;
    top: 403px;
}

/* forms, both designed and running */
.form-window {
    position: absolute;
    display: flex;
    flex-direction: column;
    border: 3px solid #0a48e0;
    border-top: none;
    border-radius: 6px 6px 0 0;
    background: #ece7d6;
}

.form-window.running {
    left: 69px;
    top: 93px;
    width: 532px;
    height: 391px;
    border-right-color: #0426b4;
    border-bottom-color: #0426b4;
}

.form-window.design {
    left: 13px;
    top: 13px;
    width: 532px;
    height: 391px;
    border-color: #7587e0;
    outline: 1px dotted #8d8d9c;
    outline-offset: 1px;
}

.form-title {
    display: flex;
    align-items: center;
    gap: 3px;
    height: 23px;
    margin: 0 -3px;
    padding: 2px 4px 0 6px;
    border-radius: 6px 6px 0 0;
    background: linear-gradient(#0a4fd0, #2a86ff 8%, #0058ee 25%, #0059f0 60%, #0068ff 88%, #0046d8);
    color: #fff;
}

.design .form-title {
    background: linear-gradient(#6f8ae0, #8fa9ee 10%, #7b93e2 40%, #86a3ea);
    color: #e4ebfb;
}

.form-title svg {
    width: 12px;
    height: 12px;
}

.form-title h2 {
    flex: 1;
}

.form-title .win-buttons svg {
    width: 15px;
    height: 15px;
}

.navigator {
    display: flex;
    align-items: center;
    height: 21px;
    border-bottom: 1px solid #5f85c4;
    background: linear-gradient(#deebfe, #c1d8fb 50%, #89aeea);
}

.navigator .grip {
    margin: 0 1px 0 4px;
}

.navigator button,
.navigator>svg {
    display: flex;
    justify-content: center;
    flex: none;
    width: 18px;
    height: 12px;
    margin-right: 1px;
}

.navigator button svg {
    width: 12px;
    height: 12px;
}

.navigator .sep {
    margin: 0 0 0 3px;
    border-left-color: #6e92cf;
    border-right-color: #eef4ff;
}

.navigator input {
    width: 42px;
    height: 17px;
    padding-left: 3px;
    background: #fff;
}

.navigator .count {
    width: 20px;
    padding-left: 3px;
    white-space: nowrap;
}

.form-body {
    padding: 31px 38px;
}

.field {
    display: flex;
    align-items: center;
    height: 18px;
    margin-bottom: 9px;
}

.field label {
    width: 32px;
}

.field input {
    width: 82px;
    height: 18px;
    padding: 0 2px;
    border: 1px solid #86a2c4;
    background: #fff;
}

.grid {
    width: 446px;
    height: 182px;
    border: 1px solid #222;
    background: #808080;
}

.grid table {
    width: 444px;
    border-collapse: collapse;
    table-layout: fixed;
}

.grid th,
.grid td {
    height: 19px;
    padding: 0 1px;
    border-right: 1px solid #b3b0a8;
    border-bottom: 1px solid #b3b0a8;
    background: #fff;
    font-weight: normal;
    text-align: left;
    white-space: nowrap;
}

.grid thead th {
    height: 15px;
    padding-left: 3px;
    border-right-color: #d2cdbd;
    border-bottom-color: #a9a592;
    background: #ece9d8;
}

.grid th:first-child {
    width: 33px;
    padding-left: 4px;
    background: #ece9d8;
}

.grid tbody th {
    border-bottom-color: #cbc6b5;
}

.grid th svg {
    display: block;
    width: 9px;
    height: 9px;
}

.grid td i {
    float: right;
    padding-right: 6px;
    font-style: normal;
    font-size: 8px;
    color: #555;
}

.grid td.selected {
    background: #2a62c4;
    outline: 1px dotted #d09a4a;
    outline-offset: -1px;
    color: #fff;
}

.current {
    display: block;
    width: 0;
    border: 4px solid transparent;
    border-left-color: #000;
    border-right: none;
    margin-left: 1px;
}

.grid-blank-head {
    height: 17px;
    border-bottom: 1px solid #a9a592;
    background: #ece9d8;
}

.grid-blank-row {
    height: 19px;
    padding: 4px;
    background: #ece9d8;
}

.grid-blank-row svg {
    display: block;
    width: 9px;
    height: 9px;
}

/* properties panel */
.properties {
    display: flex;
    flex-direction: column;
    width: 172px;
    background: #bcc7d8;
}

.panel-title {
    display: flex;
    align-items: center;
    gap: 3px;
    height: 16px;
    padding: 0 7px 0 1px;
    background: linear-gradient(#4c6087, #3d5277);
    color: #fff;
}

.panel-title h2 {
    flex: 1;
    font-size: 10px;
    font-weight: normal;
}

.panel-title svg {
    width: 9px;
    height: 10px;
    color: #d0d8e6;
}

.object {
    display: flex;
    align-items: center;
    gap: 5px;
    height: 18px;
    margin-top: 1px;
    padding: 0 7px 0 4px;
    background: #fff;
    white-space: nowrap;
}

.object b {
    font-size: 9px;
}

.object svg {
    width: 7px;
    margin-left: auto;
}

.prop-tools {
    display: flex;
    align-items: center;
    height: 22px;
    padding-left: 2px;
}

.prop-tools button {
    display: flex;
    justify-content: center;
    align-items: center;
    width: 18px;
    height: 18px;
    border: 1px solid transparent;
}

.prop-tools .on {
    border-color: #e5c365;
    background: #fff0c4;
}

.prop-list {
    display: flex;
    justify-content: space-between;
    flex: 1;
    min-height: 0;
    overflow: hidden;
    background: #f4f4f2;
}

.prop-list table {
    align-self: flex-start;
    width: 153px;
    border-collapse: collapse;
    table-layout: fixed;
}

.prop-list td,
.prop-list th {
    height: 14px;
    padding: 0 0 0 2px;
    overflow: hidden;
    border-bottom: 1px solid #ebecef;
    border-right: 1px solid #ebecef;
    background: #fff;
    font-weight: normal;
    text-align: left;
    white-space: nowrap;
    line-height: 12px;
}

.prop-list td:first-child {
    width: 12px;
    background: #f0f0f0;
    border: none;
}

.prop-list th {
    width: 66px;
    padding-left: 3px;
}

.prop-list td b {
    font-size: 9px;
}

.expand {
    display: block;
    width: 7px;
    height: 7px;
    border: 1px solid #222;
    background: linear-gradient(#222, #222) center / 3px 1px no-repeat, linear-gradient(#222, #222) center / 1px 3px no-repeat, #fff;
}

.swatch {
    display: inline-block;
    width: 17px;
    height: 11px;
    margin-right: 5px;
    border: 1px solid #222;
    background: #fff;
    vertical-align: middle;
}

.swatch.control {
    background: #ece7d6;
}

.swatch.text {
    background: #000;
}

.swatch.icon {
    background: linear-gradient(90deg, #d9534a 45%, #f0a52a 45%);
}

.scrollbar {
    display: flex;
    flex-direction: column;
    width: 17px;
    background: #f5f4ee;
}

.scrollbar .arrow {
    display: flex;
    justify-content: center;
    align-items: center;
    height: 13px;
    border-radius: 2px;
    background: #c3d3fb;
}

.scrollbar .arrow::before {
    content: "";
    width: 5px;
    height: 5px;
    margin-right: 6px;
    border: 2px solid #4d6185;
    border-width: 0 2px 2px 0;
    transform: rotate(45deg);
}

.scrollbar .up::before {
    transform: rotate(225deg);
}

.scrollbar .thumb {
    height: 206px;
    margin: 9px 0 auto;
    border: 1px solid #a4b8e8;
    border-radius: 2px;
    background: #c6d5fc;
}

.prop-help {
    height: 50px;
    margin-top: 2px;
    padding: 1px 4px;
    border: 1px solid #8f98a6;
    background: #dde1e9;
    font-size: 9px;
}

.prop-help p {
    font-size: 10px;
    font-weight: normal;
    line-height: 12px;
}

.prop-help b {
    display: block;
    line-height: 13px;
}

.status {
    height: 18px;
    padding: 6px 3px 0;
    background: #28395a;
    color: #fff;
    line-height: 14px;
}

/* floating toolbox */
.toolbox {
    position: absolute;
    left: 490px;
    top: 166px;
    width: 255px;
    height: 314px;
    border: 3px solid #324766;
    background: #fff;
}

.toolbox-title {
    display: flex;
    justify-content: flex-end;
    align-items: center;
    gap: 4px;
    height: 16px;
    padding-right: 3px;
    background: linear-gradient(#fff3cf, #ffe49b);
    color: #5e4f2c;
}

.toolbox-title svg {
    width: 9px;
    height: 10px;
}

.toolbox-group {
    height: 13px;
    margin: 0 2px;
    border: 1px solid #e5c878;
    background: #fff3cd;
}

.toolbox p {
    margin-top: 16px;
    padding: 0 14px 0 105px;
    font-size: 10px;
    font-weight: normal;
    line-height: 10px;
}

.cursor {
    position: absolute;
    left: 590px;
    top: 111px;
    width: 10px;
    height: 17px;
}
```
